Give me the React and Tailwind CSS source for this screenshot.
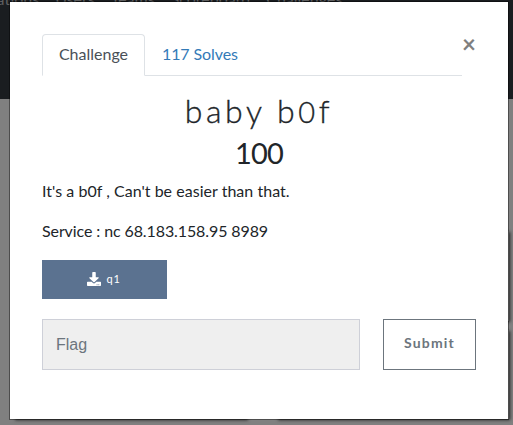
import React from "react";

const navItems = ["Notifications", "Users", "Teams", "Scoreboard", "Challenges"];

function DownloadIcon() {
  return (
    <svg viewBox="0 0 512 512" className="h-[14px] w-[14px] shrink-0" fill="currentColor" aria-hidden="true">
      <path d="M216 0h80c13.300 0 24 10.700 24 24v168h87.700c17.800 0 26.700 21.500 14.100 34.100L269.700 378.300c-7.500 7.500-19.800 7.500-27.300 0L90.100 226.100c-12.600-12.600-3.700-34.100 14.100-34.100H192V24c0-13.300 10.700-24 24-24zm296 376v112c0 13.300-10.700 24-24 24H24c-13.300 0-24-10.700-24-24V376c0-13.300 10.700-24 24-24h146.700l49 49c20.100 20.100 52.500 20.100 72.600 0l49-49H488c13.300 0 24 10.700 24 24zm-124 88c0-11-9-20-20-20s-20 9-20 20 9 20 20 20 20-9 20-20zm64 0c0-11-9-20-20-20s-20 9-20 20 9 20 20 20 20-9 20-20z" />
    </svg>
  );
}

function Backdrop() {
  return (
    <div className="absolute inset-0 flex flex-col overflow-hidden bg-[#808080]">
      <nav className="-mt-[13px] -ml-[53px] flex h-[112px] shrink-0 gap-4 bg-[#1a1d20] pl-[2px] text-[16px] leading-6 text-[#5e5f60]">
        {navItems.map((item) => (
          <span key={item}>{item}</span>
        ))}
      </nav>
      <div className="mt-[132px] flex gap-[30px] pl-[14px]">
        <div className="h-[188px] w-[233px] shrink-0 shadow-[1px_1px_3px_#222]" />
        <div className="flex w-[232px] shrink-0 flex-col gap-[9px]">
          <div className="h-[90px] shadow-[1px_1px_3px_#222]" />
          <div className="h-[89px] shadow-[1px_1px_3px_#222]" />
        </div>
      </div>
    </div>
  );
}

export default function App() {
  return (
    <div className="relative flex h-[425px] w-[513px] items-start overflow-hidden pt-px pl-[9px] font-['Lato',sans-serif] text-[#212529]">
      <Backdrop />
      <main className="relative flex h-[419px] w-[500px] flex-col border border-black/40 bg-white bg-clip-padding px-8 pt-8">
        <header className="flex">
          <div className="flex h-[42px] w-[420px] shrink-0 items-end border-b border-[#dee2e6] text-[16px] leading-6">
            <button className="-mb-px h-[42px] w-[103px] rounded-t-[4px] border border-b-white border-[#dee2e6] bg-white pb-[2px] text-[#495057]">
              Challenge
            </button>
            <button className="h-[41px] px-[17px] pb-[2px] tracking-[-0.1px] text-[#337ab7]">117 Solves</button>
          </div>
          <button aria-label="Close" className="h-5 w-[14px] text-center text-[24px] leading-5 font-bold text-[#7f7f7f]">
            ×
          </button>
        </header>
        <h3 className="mt-[16px] h-[38px] text-center text-[32px] leading-[38px] font-light tracking-[3.6px] [-webkit-text-stroke:0.35px_#212529]">
          baby b<span className="text-[29px]">0</span>f
        </h3>
        <h4 className="mt-[5px] text-center text-[29px] leading-[35px] tracking-[-0.8px]">100</h4>
        <p className="mt-[9px] text-[16px] leading-6 tracking-[0.03px]">It's a b0f , Can't be easier than that.</p>
        <p className="mt-4 text-[16px] leading-6 tracking-[-0.1px]">Service : nc 68.183.158.95 8989</p>
        <button className="mt-[17px] flex h-[39px] w-[125px] items-center justify-center gap-[5px] bg-[#5b7290] pr-px pb-px text-[11px] tracking-[0.8px] text-white">
          <DownloadIcon />
          <span>q1</span>
        </button>
        <div className="mt-5 flex justify-between">
          <input
            placeholder="Flag"
            className="h-[51px] w-[318px] border border-[#ced0d8] bg-[#efefef] px-[13px] font-['Liberation_Sans',sans-serif] text-[16px] placeholder:text-[#6c757d]"
          />
          <button className="h-[51px] w-[93px] border border-[#6c757d] pb-[4px] text-[14px] font-bold tracking-[1.15px] text-[#6c757d]">
            Submit
          </button>
        </div>
      </main>
    </div>
  );
}
